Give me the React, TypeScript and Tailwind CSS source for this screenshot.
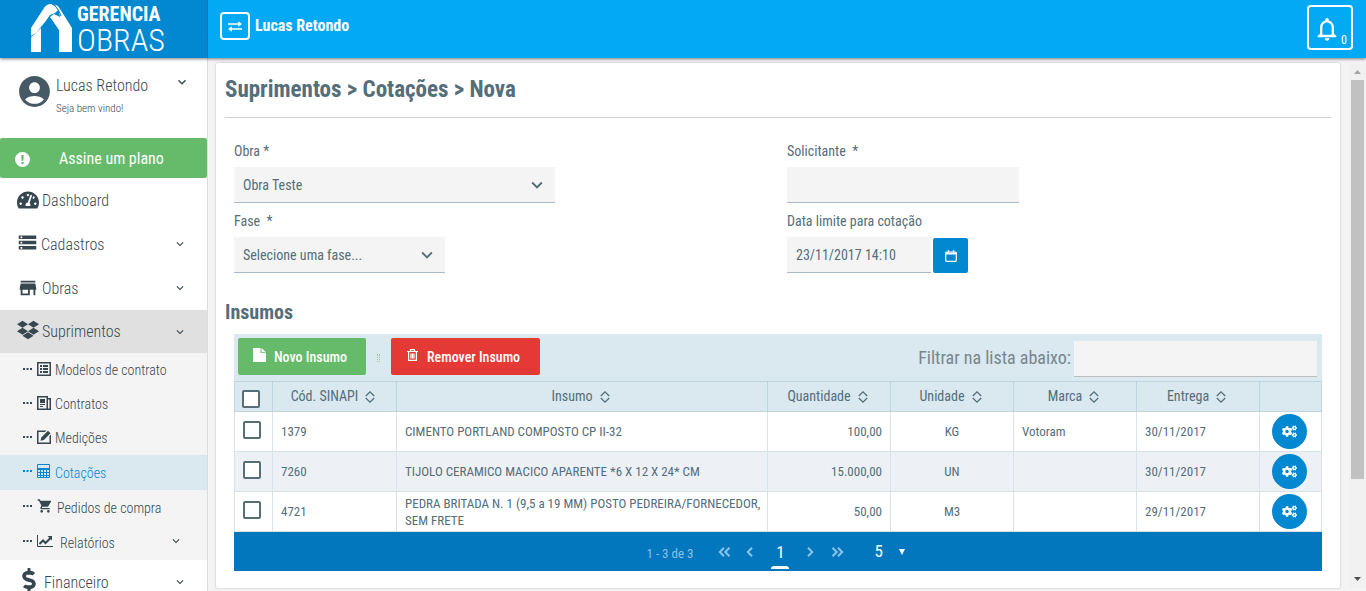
import type { ComponentType, ReactNode } from "react";
import clsx from "clsx";
import { FaCogs, FaDollarSign, FaDropbox, FaTachometerAlt } from "react-icons/fa";
import {
  MdAccountCircle,
  MdExpandMore,
  MdNotificationsNone,
  MdShoppingCart,
  MdStorage,
  MdStore,
} from "react-icons/md";

type IconProps = { className?: string };

function SwapIcon({ className }: IconProps) {
  return (
    <svg viewBox="0 0 16 12" className={className} fill="currentColor">
      <path d="M0 2.2h11.5V0L16 3.2l-4.5 3.2V4.1H0zM16 9.8H4.500V12L0 8.800l4.500-3.200v2.300H16z" />
    </svg>
  );
}

function AlertIcon({ className }: IconProps) {
  return (
    <svg viewBox="0 0 15 15" className={className} fill="currentColor">
      <path fillRule="evenodd" d="M7.500 0a7.500 7.500 0 100 15 7.500 7.500 0 000-15zM6.300 3h2.400l-.3 5.800H6.600zM6.400 10h2.200v2H6.400z" />
    </svg>
  );
}

function TemplateIcon({ className }: IconProps) {
  return (
    <svg viewBox="0 0 14 14" className={className} fill="currentColor">
      <path fillRule="evenodd" d="M0 0h14v14H0zM1.500 1.500v11h11v-11z" />
      <path d="M3 3h2v2H3zM6 3h5v2H6zM3 6h2v2H3zM6 6h5v2H6zM3 9h2v2H3zM6 9h5v2H6z" />
    </svg>
  );
}

function NewsIcon({ className }: IconProps) {
  return (
    <svg viewBox="0 0 14 14" className={className} fill="currentColor">
      <path fillRule="evenodd" d="M0 0h11v2h3v12H0zM1.500 1.500v11h8v-11zM11 3.500v9h1.500v-9z" />
      <path d="M3 3h5v4H3zM3 8h5v1H3zM3 10h3v1H3z" />
    </svg>
  );
}

function EditIcon({ className }: IconProps) {
  return (
    <svg viewBox="0 0 14 14" className={className} fill="currentColor">
      <path d="M0 .5h9.500L8 2H1.500v10.500h11V6L14 4.500V14H0z" />
      <path d="M3.500 10.800l.8-3.300L11 .8 13.500 3.200 6.800 10z" />
    </svg>
  );
}

function TableIcon({ className }: IconProps) {
  return (
    <svg viewBox="0 0 13 14" className={className} fill="none" stroke="currentColor">
      <path d="M.5.5h12v13H.5zM.5 4.500h12M.5 5.500h12M.5 8.500h12M.5 11.500h12M3.500 5v8M6.500 5v8M9.500 5v8" />
    </svg>
  );
}

function ChartIcon({ className }: IconProps) {
  return (
    <svg viewBox="0 0 16 12" className={className} fill="none" stroke="currentColor">
      <path d="M.5 0v11.500H16" />
      <path d="M2.500 9l3.500-3.500L8.500 8l5-5" strokeWidth="2" />
      <path d="M10.500 1H15v4.500z" fill="currentColor" stroke="none" />
    </svg>
  );
}

function CalendarIcon({ className }: IconProps) {
  return (
    <svg viewBox="0 0 12 12" className={className} fill="none" stroke="currentColor">
      <rect x=".7" y="2" width="10.600" height="9.300" rx="1" strokeWidth="1.200" />
      <path d="M1 3.500h10" strokeWidth="2" />
      <path d="M3.500.3v2M8.500.3v2" strokeWidth="1.400" />
    </svg>
  );
}

function FileIcon({ className }: IconProps) {
  return (
    <svg viewBox="0 0 13 14" className={className} fill="currentColor">
      <path d="M0 0h7.500v5H13v9H0z" />
      <path d="M8.500 0L13 4.200H8.500z" />
    </svg>
  );
}

function TrashIcon({ className }: IconProps) {
  return (
    <svg viewBox="0 0 11 12" className={className} fill="none" stroke="currentColor">
      <path d="M0 2.500h11M3.500 2.500V.6h4v1.900M1.600 2.500v8.900h7.800V2.500M4 4.500v5M5.500 4.500v5M7 4.500v5" strokeWidth="1.200" />
    </svg>
  );
}

function SortIcon({ className }: IconProps) {
  return (
    <svg viewBox="0 0 10 12" className={className} fill="none" stroke="currentColor" strokeWidth="1.300">
      <path d="M.8 5L5 .9 9.200 5M.8 7L5 11.100 9.200 7" />
    </svg>
  );
}

function Chevrons({ double, right }: { double?: boolean; right?: boolean }) {
  return (
    <svg
      viewBox={double ? "0 0 13 10" : "0 0 8 10"}
      className={clsx("h-[10px]", double ? "w-[13px]" : "w-2", right && "rotate-180")}
      fill="none"
      stroke="currentColor"
      strokeWidth="2"
    >
      <path d="M6 .8L1.800 5 6 9.200" />
      {double && <path d="M11.500.8L7.300 5l4.200 4.200" />}
    </svg>
  );
}

function Logo() {
  return (
    <a href="#" aria-label="Gerencia Obras" className="flex h-full w-[208px] flex-none items-center border-r border-[#0277bd] bg-[#0288d1] pl-[31px] text-white">
      <svg viewBox="0 0 42 50" className="mb-[3px] h-[50px] w-[42px] flex-none" fill="currentColor">
        <path d="M0 25L13 5c2-3 4-4 7-4l3 1 4 5-3 3-5 2-5 7-9 11-5 3z" />
        <path d="M0 34.500L10 25v24H0z" />
        <path d="M24 1.500c3 1 4 3 6 6L41 25v24H28V27l-9-13 4-3 6 3-1-6z" />
        <path d="M21 1c4 2 7 6 9 12" fill="none" stroke="#0288d1" />
      </svg>
      <span className="ml-1 flex flex-col pt-[2px]">
        <span className="text-[20px] leading-5 font-bold">GERENCIA</span>
        <span className="text-[32px] leading-8 font-light">OBRAS</span>
      </span>
    </a>
  );
}

const MENU: { label: string; icon: ComponentType<IconProps>; iconClass: string; arrow: boolean; active?: boolean }[] = [
  { label: "Dashboard", icon: FaTachometerAlt, iconClass: "size-[22px]", arrow: false },
  { label: "Cadastros", icon: MdStorage, iconClass: "size-[21px] mb-1", arrow: true },
  { label: "Obras", icon: MdStore, iconClass: "size-[22px]", arrow: true },
  { label: "Suprimentos", icon: FaDropbox, iconClass: "size-[22px] mb-1", arrow: true, active: true },
];

const SUBMENU: { label: string; icon: ComponentType<IconProps>; iconClass: string; row: string; active?: boolean; arrow?: boolean }[] = [
  { label: "Modelos de contrato", icon: TemplateIcon, iconClass: "size-[14px]", row: "h-[34px]" },
  { label: "Contratos", icon: NewsIcon, iconClass: "size-[14px]", row: "h-[34px]" },
  { label: "Medições", icon: EditIcon, iconClass: "size-[14px]", row: "h-[34px]" },
  { label: "Cotações", icon: TableIcon, iconClass: "h-[14px] w-[13px] mr-px", row: "h-[35px]", active: true },
  { label: "Pedidos de compra", icon: MdShoppingCart, iconClass: "size-4", row: "h-[35px]" },
  { label: "Relatórios", icon: ChartIcon, iconClass: "h-3 w-4 mr-[3px]", row: "h-[35px]", arrow: true },
];

function MenuItem({ item }: { item: (typeof MENU)[number] }) {
  const Icon = item.icon;
  return (
    <a
      href="#"
      className={clsx(
        "flex items-center pr-5 pl-[17px] text-[16px]",
        item.active ? "h-[43px] bg-[#e0e0e0]" : "h-11",
      )}
    >
      <Icon className={clsx("mr-[3px] flex-none", item.iconClass)} />
      <span className="flex-1 pt-px">{item.label}</span>
      {item.arrow && <MdExpandMore className="size-[14px]" />}
    </a>
  );
}

function Sidebar() {
  return (
    <aside className="w-[208px] flex-none overflow-hidden border-r border-[#dcdcdc] bg-white font-light text-[#37474f]">
      <div className="flex h-20 items-start pt-[15px] pr-[17px] pl-4">
        <MdAccountCircle className="size-[37px] flex-none text-[#455a64]" />
        <div className="ml-[3px] flex-1">
          <p className="text-[16px] leading-[25px]">Lucas Retondo</p>
          <p className="text-[11px] leading-[22px]">Seja bem vindo!</p>
        </div>
        <MdExpandMore className="mt-px size-4" />
      </div>
      <button className="flex h-10 w-full items-center rounded-[2px] bg-[#66bb6a] pl-[15px] text-[16px] font-normal text-white">
        <AlertIcon className="mt-[2px] size-[15px]" />
        <span className="ml-[29px] pt-[2px]">Assine um plano</span>
      </button>
      <nav>
        {MENU.map((item) => (
          <MenuItem key={item.label} item={item} />
        ))}
        <ul className="bg-[#f4f4f4]">
          {SUBMENU.map(({ label, icon: Icon, iconClass, row, active, arrow }) => (
            <li key={label}>
              <a
                href="#"
                className={clsx(
                  "flex items-center pr-6 pl-[23px] text-[14px]",
                  row,
                  active && "bg-[#dae8ef] text-[#0288d1]",
                )}
              >
                <svg viewBox="0 0 9 2" className="mr-[5px] mb-[3px] h-[2px] w-[9px] flex-none" fill="currentColor">
                  <path d="M0 0h2v2H0zM3.500 0h2v2h-2zM7 0h2v2H7z" />
                </svg>
                <Icon className={clsx("mb-[3px] flex-none", iconClass)} />
                <span className="ml-1 flex-1 pt-px">{label}</span>
                {arrow && <MdExpandMore className="mb-[3px] size-[14px]" />}
              </a>
            </li>
          ))}
        </ul>
        <MenuItem item={{ label: "Financeiro", icon: FaDollarSign, iconClass: "size-6 mb-1", arrow: true }} />
      </nav>
    </aside>
  );
}

function Field({ id, label, children }: { id: string; label: string; children: ReactNode }) {
  return (
    <div className="pl-[9px]">
      <label htmlFor={id} className="block h-[33px] pt-[7px] text-[14px] leading-5 whitespace-pre">
        {label}
      </label>
      {children}
    </div>
  );
}

const CONTROL = "h-9 border-b border-[#a7bcc6] bg-[#f4f4f4] px-[9px] pt-px text-[14px] outline-none";

function Select({ id, width, value }: { id: string; width: string; value: string }) {
  return (
    <div className={clsx("relative", width)}>
      <select id={id} className={clsx(CONTROL, "block w-full appearance-none")}>
        <option>{value}</option>
      </select>
      <MdExpandMore className="pointer-events-none absolute top-[7px] right-[7px] size-[22px]" />
    </div>
  );
}

const COLUMNS = ["Cód. SINAPI", "Insumo", "Quantidade", "Unidade", "Marca", "Entrega"];

const ROWS = [
  { code: "1379", name: "CIMENTO PORTLAND COMPOSTO CP II-32", qty: "100,00", unit: "KG", brand: "Votoram", date: "30/11/2017" },
  { code: "7260", name: "TIJOLO CERAMICO MACICO APARENTE *6 X 12 X 24* CM", qty: "15.000,00", unit: "UN", brand: "", date: "30/11/2017" },
  { code: "4721", name: "PEDRA BRITADA N. 1 (9,5 a 19 MM) POSTO PEDREIRA/FORNECEDOR, SEM FRETE", qty: "50,00", unit: "M3", brand: "", date: "29/11/2017" },
];

function Checkbox({ label }: { label: string }) {
  return (
    <input
      type="checkbox"
      aria-label={label}
      className="block size-[18px] appearance-none rounded-[2px] border-2 border-[#546e7a] bg-white"
    />
  );
}

function ItemsTable() {
  return (
    <div className="mx-[9px]">
      <div className="flex h-[47px] items-center bg-[#dae8ef] pr-[5px] pl-1">
        <button className="mb-[3px] flex h-[37px] w-32 items-center rounded-[2px] bg-[#66bb6a] pl-[15px] text-[14px] font-medium text-white">
          <FileIcon className="mr-2 mb-0.5 h-[14px] w-[13px]" />
          <span className="pt-[2px]">Novo Insumo</span>
        </button>
        <span className="mx-[11px] h-2 w-[3px] border-x border-dotted border-[#a5c4a9]" />
        <button className="mb-[3px] flex h-[37px] w-[149px] items-center rounded-[2px] bg-[#e53935] pl-4 text-[14px] font-medium text-white">
          <TrashIcon className="mr-[9px] mb-0.5 h-3 w-[11px]" />
          <span className="pt-[2px]">Remover Insumo</span>
        </button>
        <label htmlFor="filtro" className="mr-[3px] ml-auto text-[18px] text-[#78868d]">
          Filtrar na lista abaixo:
        </label>
        <input id="filtro" className="mt-[2px] h-9 w-[243px] border-b border-[#bdbdbd] bg-[#f4f4f4] px-2 outline-none" />
      </div>
      <table className="w-full table-fixed border-collapse text-[13px] leading-[17px]">
        <colgroup>
          <col className="w-[38px]" />
          <col className="w-[124px]" />
          <col />
          <col className="w-[123px]" />
          <col className="w-[123px]" />
          <col className="w-[123px]" />
          <col className="w-[123px]" />
          <col className="w-[62px]" />
        </colgroup>
        <thead className="bg-[#dae8ef] text-[14px]">
          <tr className="h-[30px]">
            <th className="border border-[#bfd4df] px-[7px] pt-1">
              <Checkbox label="Selecionar todos" />
            </th>
            {COLUMNS.map((c) => (
              <th key={c} className="border border-[#bfd4df] pr-[3px] font-normal">
                <span className="inline-flex items-center gap-[7px]">
                  {c}
                  <SortIcon className="h-3 w-[10px]" />
                </span>
              </th>
            ))}
            <th className="border border-[#bfd4df]" />
          </tr>
        </thead>
        <tbody>
          {ROWS.map((r) => (
            <tr key={r.code} className="h-10 even:bg-[#edf1f6]">
              <td className="border border-[#d8e2e7] px-2 pb-[3px]">
                <Checkbox label={r.code} />
              </td>
              <td className="border border-[#d8e2e7] px-2">{r.code}</td>
              <td className="border border-[#d8e2e7] pr-px pl-2">{r.name}</td>
              <td className="border border-[#d8e2e7] px-2 text-right">{r.qty}</td>
              <td className="border border-[#d8e2e7] px-2 text-center">{r.unit}</td>
              <td className="border border-[#d8e2e7] px-2">{r.brand}</td>
              <td className="border border-[#d8e2e7] px-2">{r.date}</td>
              <td className="border border-[#d8e2e7] pr-[2px]">
                <button aria-label="Opções" className="mx-auto flex size-[35px] items-center justify-center rounded-full bg-[#0288d1] text-white">
                  <FaCogs className="size-[15px]" />
                </button>
              </td>
            </tr>
          ))}
        </tbody>
      </table>
      <div className="flex h-[39px] items-center justify-center bg-[#0277bd] pr-[3px] text-[#8cc3e6]">
        <span className="mr-[25px] pt-1 text-[13px]">1 - 3 de 3</span>
        <button aria-label="Primeira página"><Chevrons double /></button>
        <button aria-label="Página anterior" className="ml-[15px]"><Chevrons /></button>
        <button className="mx-[17px] flex h-full w-[18px] flex-col items-center justify-end text-[17px] text-white">
          1
          <span className="mt-[1px] mb-[2px] h-[3px] w-full rounded-t-[3px] bg-white" />
        </button>
        <button aria-label="Próxima página"><Chevrons right /></button>
        <button aria-label="Última página" className="ml-[17px]"><Chevrons double right /></button>
        <span className="relative ml-[30px] text-white">
          <select aria-label="Itens por página" className="w-8 appearance-none bg-transparent text-[17px] outline-none">
            <option>5</option>
          </select>
          <svg viewBox="0 0 6 6" className="pointer-events-none absolute top-[10px] right-px size-[6px]" fill="currentColor">
            <path d="M0 0h6L3 6z" />
          </svg>
        </span>
      </div>
    </div>
  );
}

function ScrollTrack() {
  return (
    <div className="ml-[9px] flex w-[17px] flex-none flex-col items-center bg-[#f1f1f1]">
      <svg viewBox="0 0 7 4" className="mt-[7px] mb-[6px] h-1 w-[7px]" fill="#a3a3a3">
        <path d="M0 4L3.500 0 7 4z" />
      </svg>
      <div className="h-[76%] w-[13px] bg-[#c1c1c1]" />
      <svg viewBox="0 0 7 4" className="mt-auto mb-[7px] h-1 w-[7px]" fill="#505050">
        <path d="M0 0h7L3.500 4z" />
      </svg>
    </div>
  );
}

export default function App() {
  return (
    <div className="flex h-screen flex-col overflow-hidden bg-[#f4f4f4] font-['Roboto_Condensed','Liberation_Sans_Narrow',sans-serif] text-[#546e7a]">
      <header className="relative flex h-[58px] flex-none items-center bg-[#03a9f4] pr-[13px] text-white shadow-[0_1px_3px_rgba(0,0,0,0.5)]">
        <Logo />
        <button aria-label="Trocar empresa" className="mb-[6px] ml-3 flex h-7 w-[30px] items-center justify-center rounded-[4px] border-2 border-white">
          <SwapIcon className="h-[11px] w-[14px]" />
        </button>
        <span className="mb-[6px] ml-[5px] text-[16px] font-bold">Lucas Retondo</span>
        <button className="mb-[3px] ml-auto flex h-[45px] w-[46px] items-center rounded-[4px] border-2 border-white pl-1">
          <MdNotificationsNone className="mt-[2px] size-7" />
          <span className="mt-6 text-[12px]">0</span>
        </button>
      </header>
      <div className="flex min-h-0 flex-1">
        <Sidebar />
        <div className="flex min-w-0 flex-1 pt-[5px] pb-[3px] pl-2">
          <main className="min-w-0 flex-1 overflow-hidden rounded-[2px] bg-white px-[9px] shadow-[0_0_2px_rgba(0,0,0,0.3)]">
            <h1 className="h-[55px] border-b border-[#d0d0d0] pt-[11px] text-[23px] leading-8 font-bold">
              Suprimentos &gt; Cotações &gt; Nova
            </h1>
            <form className="grid grid-cols-2 gap-y-px pt-4">
              <Field id="obra" label="Obra *">
                <Select id="obra" width="w-[321px]" value="Obra Teste" />
              </Field>
              <Field id="solicitante" label="Solicitante  *">
                <input id="solicitante" className={clsx(CONTROL, "block w-[232px]")} />
              </Field>
              <Field id="fase" label="Fase  *">
                <Select id="fase" width="w-[211px]" value="Selecione uma fase..." />
              </Field>
              <Field id="limite" label="Data limite para cotação">
                <div className="flex items-end gap-[2px]">
                  <input id="limite" defaultValue="23/11/2017 14:10" className={clsx(CONTROL, "w-36")} />
                  <button type="button" aria-label="Abrir calendário" className="flex size-[35px] items-center justify-center rounded-[2px] bg-[#0288d1] text-white">
                    <CalendarIcon className="size-3" />
                  </button>
                </div>
              </Field>
            </form>
            <h2 className="mt-6 mb-[7px] text-[20px] leading-[30px] font-bold">Insumos</h2>
            <ItemsTable />
          </main>
          <ScrollTrack />
        </div>
      </div>
    </div>
  );
}
